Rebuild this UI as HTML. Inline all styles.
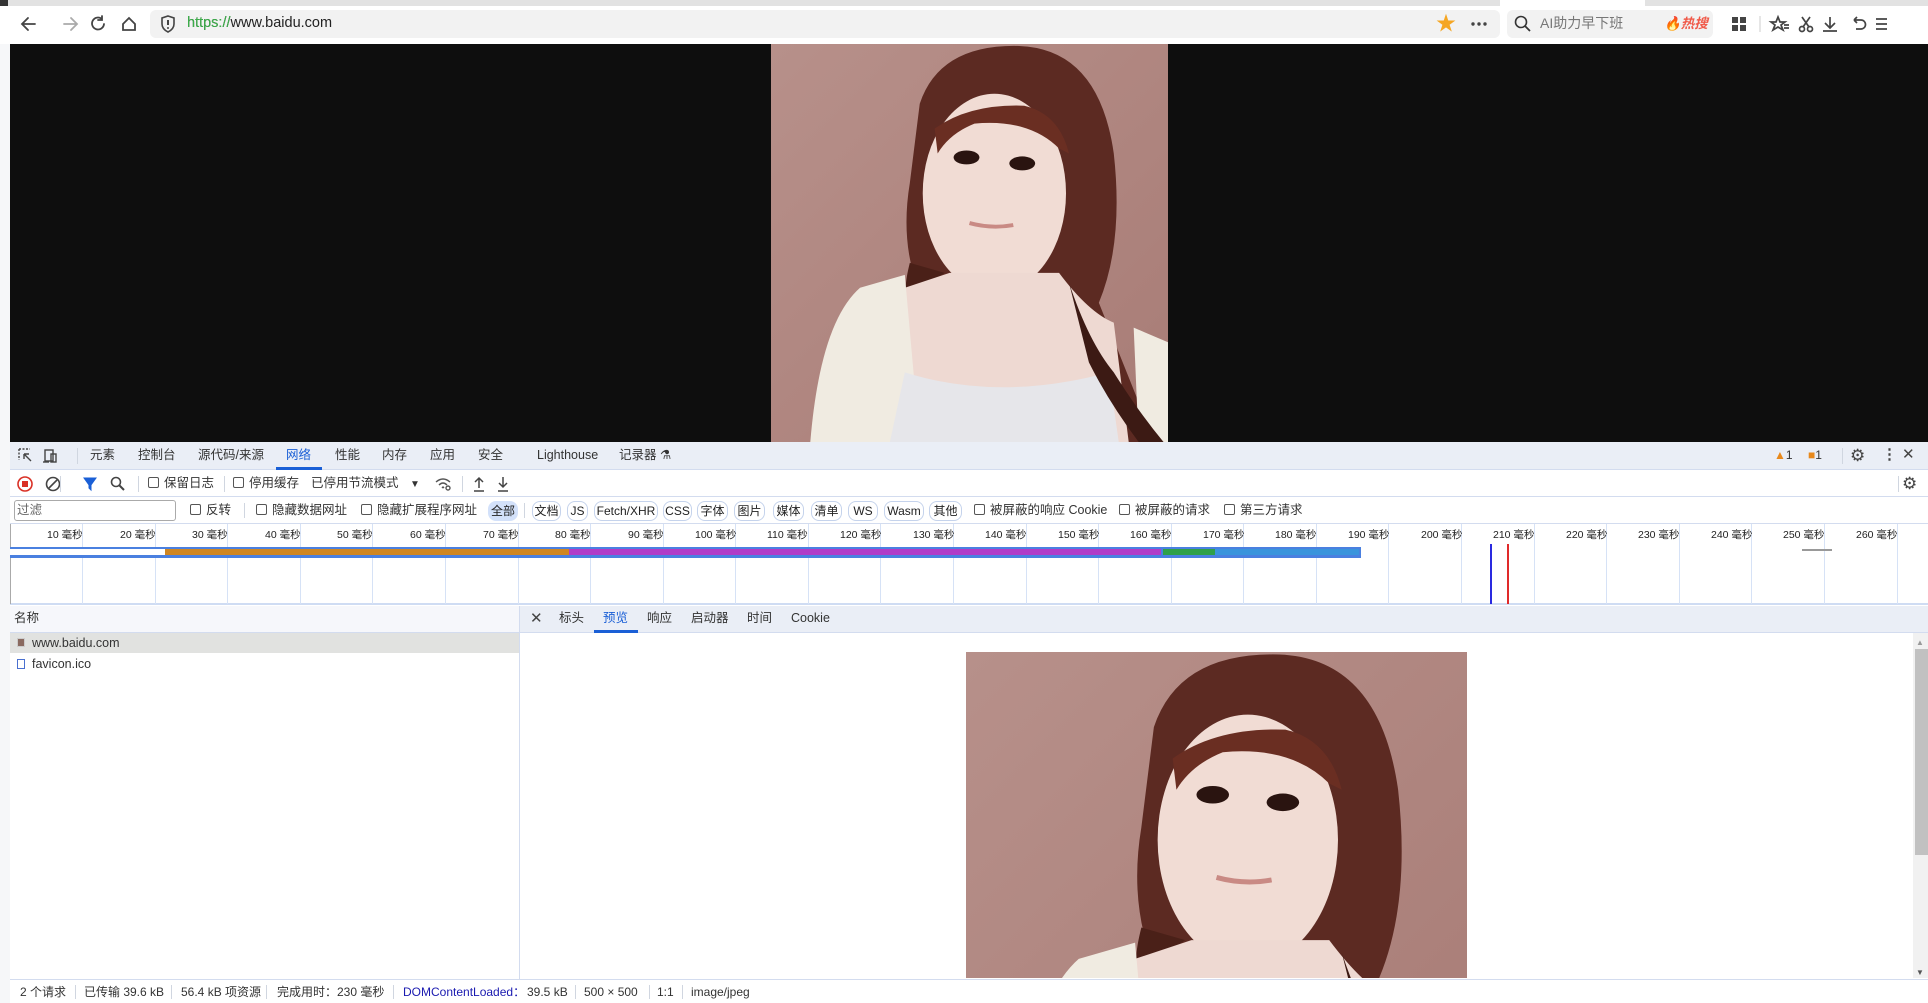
<!DOCTYPE html>
<html><head><meta charset="utf-8">
<style>
*{box-sizing:border-box;margin:0;padding:0}
html{width:1928px;height:1003px;overflow:hidden}
body{width:1928px;height:1003px;overflow:hidden;background:#fff;font-family:"Liberation Sans","Noto Sans CJK SC",sans-serif;font-size:12.5px;color:#333;position:relative}
.a{position:absolute}
.t{position:absolute;white-space:nowrap;line-height:15px;margin-top:-1px}
.pill{position:absolute;top:501px;height:20px;border:1px solid #c5d3ec;border-radius:8px;font-size:12px;line-height:18px;text-align:center;color:#222}
.cb{display:inline-block;width:11px;height:11px;border:1px solid #555;border-radius:2px;vertical-align:-1px;margin-right:5px}
.sep{position:absolute;width:1px;background:#d0d6e0}
.vl{position:absolute;top:524px;height:80px;width:1px;background:#d6e2f6}
.tk{position:absolute;top:529px;font-size:10.5px;color:#222;line-height:13px}
</style></head><body>
<svg width="0" height="0" style="position:absolute">
<defs>
<symbol id="ph" viewBox="0 0 400 400" preserveAspectRatio="xMidYMin slice">
<defs><linearGradient id="bg" x1="0" y1="0" x2="1" y2="1"><stop offset="0" stop-color="#b7908a"/><stop offset="1" stop-color="#a87c76"/></linearGradient></defs>
<rect width="400" height="400" fill="url(#bg)"/>
<path d="M150 60 Q170 0 250 2 Q330 5 345 110 Q355 200 330 260 L370 360 L400 400 L320 400 L290 300 Q250 250 240 240 L150 250 Q130 200 140 140 Z" fill="#5c2a22"/>
<path d="M140 220 Q130 260 145 250 L175 230 Z" fill="#4a2018"/>
<ellipse cx="225" cy="150" rx="72" ry="100" fill="#f1dcd4"/>
<path d="M165 85 Q200 60 255 62 Q290 70 300 110 L290 105 Q260 75 205 80 Q180 90 168 110 Z" fill="#6a2e22"/>
<ellipse cx="197" cy="114" rx="13" ry="7" fill="#2a1410"/>
<ellipse cx="253" cy="120" rx="13" ry="7" fill="#2a1410"/>
<path d="M200 180 Q222 186 244 182" stroke="#c98a84" stroke-width="4" fill="none"/>
<path d="M180 230 L290 230 Q320 270 345 280 L360 400 L110 400 L120 250 Z" fill="#eed9d2"/>
<path d="M40 400 Q50 280 90 245 L135 232 L150 400 Z" fill="#f0ebe1"/>
<path d="M365 285 L400 300 L400 400 L370 400 Z" fill="#f0ebe1"/>
<path d="M120 400 L135 330 Q230 360 340 330 L350 400 Z" fill="#e6e6ea"/>
<path d="M300 240 Q320 300 345 330 Q370 370 395 400 L370 400 Q340 360 320 320 Z" fill="#3c1a14"/>
</symbol>
</defs></svg>

<div class="a" style="left:0;top:0;width:1928px;height:6px;background:#e2e2e2"></div>
<div class="a" style="left:0;top:0;width:8px;height:14px;background:#333"></div>
<div class="a" style="left:1500px;top:0;width:145px;height:6px;background:#fff"></div>
<div class="a" style="left:0;top:6px;width:1928px;height:38px;background:#fff"></div>
<svg class="a" style="left:20px;top:14px" width="120" height="20" fill="none" stroke-width="1.8" stroke-linecap="round">
<path d="M15 10H3M8 4L2 10L8 16" stroke="#444"/>
<path d="M44 10H56M51 4L57 10L51 16" stroke="#aaa"/>
<path d="M82 5A6 6 0 1 0 84 10M82 2V6H78" stroke="#444"/>
<path d="M103 10L109 4L115 10V16H103Z" stroke="#444"/>
</svg>
<div class="a" style="left:150px;top:10px;width:1350px;height:28px;background:#f2f2f2;border-radius:6px"></div>
<svg class="a" style="left:160px;top:15px" width="16" height="18"><path d="M8 1L14 3V9Q14 14 8 17Q2 14 2 9V3Z" fill="none" stroke="#444" stroke-width="1.6"/><path d="M8 5V10" stroke="#444" stroke-width="2"/><circle cx="8" cy="13" r="1" fill="#444"/></svg>
<div class="t" style="left:187px;top:17px;font-size:14.5px;color:#222">https://www.baidu.com</div>
<div class="t" style="left:187px;top:17px;font-size:14.5px;color:#3cb04a">https://</div>
<div class="t" style="left:1436px;top:15px;font-size:20px;color:#f5a623;line-height:20px">★</div>
<svg class="a" style="left:1470px;top:21px" width="18" height="6"><circle cx="3" cy="3" r="1.7" fill="#444"/><circle cx="9" cy="3" r="1.7" fill="#444"/><circle cx="15" cy="3" r="1.7" fill="#444"/></svg>
<div class="a" style="left:1507px;top:10px;width:206px;height:28px;background:#f2f2f2;border-radius:6px"></div>
<svg class="a" style="left:1514px;top:15px" width="18" height="18"><circle cx="7" cy="7" r="5.5" fill="none" stroke="#333" stroke-width="1.6"/><path d="M11 11L16 16" stroke="#333" stroke-width="1.8"/></svg>
<div class="t" style="left:1540px;top:17px;font-size:14px;color:#777">AI助力早下班</div>
<div class="t" style="left:1664px;top:17px;font-size:13.5px;color:#f05a4a;font-style:italic;font-weight:bold">🔥热搜</div>
<svg class="a" style="left:1730px;top:14px" width="200" height="20" fill="none" stroke="#444" stroke-width="1.7">
<rect x="2" y="3" width="6" height="6" fill="#444" stroke="none"/><rect x="10" y="3" width="6" height="6" fill="#444" stroke="none"/><rect x="2" y="11" width="6" height="6" fill="#444" stroke="none"/><rect x="10" y="11" width="6" height="6" fill="#444" stroke="none"/>
<path d="M30 2V18" stroke="#ccc" stroke-width="1"/>
<path d="M48 3L50 8H55L51 11L53 16L48 13L43 16L45 11L41 8H46Z"/><path d="M54 11H59M54 14H59"/>
<circle cx="72" cy="15" r="2.5"/><circle cx="80" cy="15" r="2.5"/><path d="M73 13L80 3M79 13L72 3"/>
<path d="M100 3V13M95 9L100 14L105 9M93 17H107"/>
<path d="M124 6H131A4 4 0 0 1 131 15H126M124 6L127 3M124 6L127 9"/>
<path d="M146 5H157M146 10H157M146 15H157"/>
</svg>
<div class="a" style="left:0;top:44px;width:10px;height:959px;background:#f6f7f9"></div>
<div class="a" style="left:10px;top:44px;width:1918px;height:398px;background:#0e0e0e"></div>
<svg class="a" style="left:771px;top:44px" width="397" height="398"><use href="#ph" width="397" height="398"/></svg>

<div class="a" style="left:10px;top:442px;width:1918px;height:28px;background:#eaeef6;border-bottom:1px solid #d3dcef"></div>
<svg class="a" style="left:18px;top:448px" width="50" height="16" fill="none" stroke="#444" stroke-width="1.4">
<path d="M1 1H12M1 1V12" stroke-dasharray="2 1.5"/><path d="M6 6L13 13M6 6H11M6 6V11"/>
<rect x="27" y="2" width="8" height="11"/><rect x="33" y="6" width="5" height="8"/><path d="M25 14H31"/>
</svg>
<div class="sep" style="left:77px;top:448px;height:16px"></div>
<div class="t" style="left:90px;top:449px">元素</div>
<div class="t" style="left:138px;top:449px">控制台</div>
<div class="t" style="left:198px;top:449px">源代码/来源</div>
<div class="t" style="left:286px;top:449px;color:#1a5fd6">网络</div>
<div class="a" style="left:276px;top:467px;width:46px;height:3px;background:#1a5fd6"></div>
<div class="t" style="left:335px;top:449px">性能</div>
<div class="t" style="left:382px;top:449px">内存</div>
<div class="t" style="left:430px;top:449px">应用</div>
<div class="t" style="left:478px;top:449px">安全</div>
<div class="t" style="left:537px;top:449px">Lighthouse</div>
<div class="t" style="left:619px;top:449px">记录器 ⚗</div>
<div class="t" style="left:1774px;top:449px;font-size:12px"><span style="color:#e8891c">▲</span>1</div>
<div class="t" style="left:1808px;top:449px;font-size:12px"><span style="color:#e8891c">■</span>1</div>
<div class="sep" style="left:1842px;top:448px;height:16px"></div>
<div class="t" style="left:1850px;top:448px;font-size:17px;color:#444;line-height:17px">⚙</div>
<div class="t" style="left:1882px;top:448px;font-size:15px;color:#444;font-weight:bold">⋮</div>
<div class="t" style="left:1902px;top:448px;font-size:15px;color:#444">✕</div>

<div class="a" style="left:10px;top:470px;width:1918px;height:27px;background:#fff;border-bottom:1px solid #d3dcef"></div>
<svg class="a" style="left:16px;top:475px" width="140" height="18" fill="none" stroke-width="1.6">
<circle cx="9" cy="9" r="7" stroke="#d93025"/><rect x="6" y="6" width="6" height="6" fill="#d93025" stroke="none"/>
<circle cx="37" cy="9" r="6.5" stroke="#444"/><path d="M33 13L41 5" stroke="#444"/>
<path d="M68 3H80L75 10V15L73 13V10Z" fill="#1a5fd6" stroke="#1a5fd6" stroke-width="1"/>
<circle cx="100" cy="7" r="4.5" stroke="#444"/><path d="M103 10L108 15" stroke="#444" stroke-width="2"/>
</svg>
<div class="sep" style="left:60px;top:476px;height:16px"></div>
<div class="sep" style="left:138px;top:476px;height:16px"></div>
<div class="t" style="left:148px;top:477px"><span class="cb"></span>保留日志</div>
<div class="sep" style="left:224px;top:476px;height:16px"></div>
<div class="t" style="left:233px;top:477px"><span class="cb"></span>停用缓存</div>
<div class="t" style="left:311px;top:477px">已停用节流模式</div>
<div class="t" style="left:410px;top:478px;font-size:10px">▼</div>
<svg class="a" style="left:434px;top:476px" width="20" height="16" fill="none" stroke="#555" stroke-width="1.4"><path d="M2 6Q9 0 16 6M5 9Q9 5 13 9M8 12L9 11L10 12"/><circle cx="14" cy="12" r="2"/></svg>
<div class="sep" style="left:462px;top:476px;height:16px"></div>
<svg class="a" style="left:472px;top:475px" width="40" height="18" fill="none" stroke="#444" stroke-width="1.5"><path d="M7 13V3M3 7L7 3L11 7M2 16H12"/><path d="M31 2V12M27 8L31 12L35 8M26 16H36"/></svg>
<div class="sep" style="left:1898px;top:476px;height:16px"></div>
<div class="t" style="left:1902px;top:476px;font-size:17px;color:#444;line-height:17px">⚙</div>

<div class="a" style="left:10px;top:497px;width:1918px;height:27px;background:#fff;border-bottom:1px solid #d3dcef"></div>
<div class="a" style="left:14px;top:500px;width:162px;height:21px;border:1px solid #aaa;border-radius:3px"></div>
<div class="t" style="left:17px;top:504px;color:#666">过滤</div>
<div class="t" style="left:190px;top:504px"><span class="cb"></span>反转</div>
<div class="sep" style="left:244px;top:503px;height:15px"></div>
<div class="t" style="left:256px;top:504px"><span class="cb"></span>隐藏数据网址</div>
<div class="t" style="left:361px;top:504px"><span class="cb"></span>隐藏扩展程序网址</div>
<div class="pill" style="left:488px;width:30px;background:#d3e1fa;border-color:#d3e1fa">全部</div>
<div class="sep" style="left:524px;top:503px;height:15px"></div>
<div class="pill" style="left:532px;width:29px">文档</div>
<div class="pill" style="left:567px;width:21px">JS</div>
<div class="pill" style="left:594px;width:64px">Fetch/XHR</div>
<div class="pill" style="left:663px;width:29px">CSS</div>
<div class="pill" style="left:697px;width:31px">字体</div>
<div class="pill" style="left:734px;width:31px">图片</div>
<div class="pill" style="left:773px;width:31px">媒体</div>
<div class="pill" style="left:811px;width:31px">清单</div>
<div class="pill" style="left:848px;width:30px">WS</div>
<div class="pill" style="left:884px;width:40px">Wasm</div>
<div class="pill" style="left:929px;width:33px">其他</div>
<div class="t" style="left:974px;top:504px"><span class="cb"></span>被屏蔽的响应 Cookie</div>
<div class="t" style="left:1119px;top:504px"><span class="cb"></span>被屏蔽的请求</div>
<div class="t" style="left:1224px;top:504px"><span class="cb"></span>第三方请求</div>

<div class="a" style="left:10px;top:524px;width:1918px;height:81px;background:#fff;border-bottom:2px solid #cfdcf3"></div>
<div class="a" style="left:10px;top:524px;width:1px;height:80px;background:#aaa"></div>
<div class="vl" style="left:82px"></div><div class="vl" style="left:155px"></div><div class="vl" style="left:227px"></div><div class="vl" style="left:300px"></div><div class="vl" style="left:372px"></div><div class="vl" style="left:445px"></div><div class="vl" style="left:518px"></div><div class="vl" style="left:590px"></div><div class="vl" style="left:663px"></div><div class="vl" style="left:735px"></div><div class="vl" style="left:808px"></div><div class="vl" style="left:880px"></div><div class="vl" style="left:953px"></div><div class="vl" style="left:1026px"></div><div class="vl" style="left:1098px"></div><div class="vl" style="left:1171px"></div><div class="vl" style="left:1243px"></div><div class="vl" style="left:1316px"></div><div class="vl" style="left:1388px"></div><div class="vl" style="left:1461px"></div><div class="vl" style="left:1534px"></div><div class="vl" style="left:1606px"></div><div class="vl" style="left:1679px"></div><div class="vl" style="left:1751px"></div><div class="vl" style="left:1824px"></div><div class="vl" style="left:1897px"></div>
<div class="tk" style="left:47px">10 毫秒</div><div class="tk" style="left:120px">20 毫秒</div><div class="tk" style="left:192px">30 毫秒</div><div class="tk" style="left:265px">40 毫秒</div><div class="tk" style="left:337px">50 毫秒</div><div class="tk" style="left:410px">60 毫秒</div><div class="tk" style="left:483px">70 毫秒</div><div class="tk" style="left:555px">80 毫秒</div><div class="tk" style="left:628px">90 毫秒</div><div class="tk" style="left:695px">100 毫秒</div><div class="tk" style="left:767px">110 毫秒</div><div class="tk" style="left:840px">120 毫秒</div><div class="tk" style="left:913px">130 毫秒</div><div class="tk" style="left:985px">140 毫秒</div><div class="tk" style="left:1058px">150 毫秒</div><div class="tk" style="left:1130px">160 毫秒</div><div class="tk" style="left:1203px">170 毫秒</div><div class="tk" style="left:1275px">180 毫秒</div><div class="tk" style="left:1348px">190 毫秒</div><div class="tk" style="left:1421px">200 毫秒</div><div class="tk" style="left:1493px">210 毫秒</div><div class="tk" style="left:1566px">220 毫秒</div><div class="tk" style="left:1638px">230 毫秒</div><div class="tk" style="left:1711px">240 毫秒</div><div class="tk" style="left:1783px">250 毫秒</div><div class="tk" style="left:1856px">260 毫秒</div>
<div class="a" style="left:10px;top:547px;width:1351px;height:11px;background:#4a80e0"></div>
<div class="a" style="left:10px;top:549px;width:155px;height:6px;background:#fff"></div>
<div class="a" style="left:165px;top:549px;width:404px;height:6px;background:#cf8622"></div>
<div class="a" style="left:569px;top:549px;width:592px;height:6px;background:#b03cc8"></div>
<div class="a" style="left:1163px;top:549px;width:52px;height:6px;background:#2fa04a"></div>
<div class="a" style="left:1215px;top:549px;width:144px;height:6px;background:#3a94dc"></div>
<div class="a" style="left:1490px;top:544px;width:2px;height:60px;background:#2a2ae0"></div>
<div class="a" style="left:1507px;top:544px;width:2px;height:60px;background:#e02a2a"></div>
<div class="a" style="left:1802px;top:549px;width:30px;height:2px;background:#999"></div>

<div class="a" style="left:10px;top:606px;width:509px;height:27px;background:#f6f7fb;border-bottom:1px solid #d3dcef"></div>
<div class="t" style="left:14px;top:612px">名称</div>
<div class="a" style="left:10px;top:633px;width:509px;height:20px;background:#e1e2e0"></div>
<div class="a" style="left:17px;top:638px;width:8px;height:9px;background:#8a6a60;border:1px solid #ccc"></div>
<div class="t" style="left:32px;top:637px">www.baidu.com</div>
<div class="a" style="left:17px;top:659px;width:8px;height:10px;border:1px solid #4a70d0"></div>
<div class="t" style="left:32px;top:658px">favicon.ico</div>
<div class="a" style="left:519px;top:606px;width:1px;height:374px;background:#d3dcef"></div>

<div class="a" style="left:520px;top:606px;width:1408px;height:27px;background:#eaeef6;border-bottom:1px solid #d3dcef"></div>
<div class="t" style="left:530px;top:612px;font-size:15px;color:#444">✕</div>
<div class="t" style="left:559px;top:612px">标头</div>
<div class="t" style="left:603px;top:612px;color:#1a5fd6">预览</div>
<div class="a" style="left:594px;top:630px;width:44px;height:3px;background:#1a5fd6"></div>
<div class="t" style="left:647px;top:612px">响应</div>
<div class="t" style="left:691px;top:612px">启动器</div>
<div class="t" style="left:747px;top:612px">时间</div>
<div class="t" style="left:791px;top:612px">Cookie</div>
<svg class="a" style="left:966px;top:652px" width="501" height="326"><use href="#ph" width="501" height="501"/></svg>
<div class="a" style="left:1913px;top:633px;width:15px;height:345px;background:#f1f1f1"></div>
<div class="a" style="left:1915px;top:649px;width:13px;height:206px;background:#c1c1c1"></div>
<div class="t" style="left:1916px;top:636px;font-size:8px;color:#999">▲</div>
<div class="t" style="left:1916px;top:966px;font-size:8px;color:#555">▼</div>

<div class="a" style="left:10px;top:979px;width:1918px;height:24px;background:#fff;border-top:1px solid #d3dcef"></div>
<div class="t" style="left:20px;top:986px;font-size:12px">2 个请求</div>
<div class="sep" style="left:75px;top:985px;height:14px"></div>
<div class="t" style="left:84px;top:986px;font-size:12px">已传输 39.6 kB</div>
<div class="sep" style="left:171px;top:985px;height:14px"></div>
<div class="t" style="left:181px;top:986px;font-size:12px">56.4 kB 项资源</div>
<div class="sep" style="left:266px;top:985px;height:14px"></div>
<div class="t" style="left:277px;top:986px;font-size:12px">完成用时：230 毫秒</div>
<div class="sep" style="left:393px;top:985px;height:14px"></div>
<div class="t" style="left:403px;top:986px;font-size:12px;color:#1a1ab0">DOMContentLoaded：</div>
<div class="a" style="left:519px;top:979px;width:1409px;height:24px;background:#fff;border-top:1px solid #d3dcef"></div>
<div class="t" style="left:527px;top:986px;font-size:12px">39.5 kB</div>
<div class="sep" style="left:575px;top:985px;height:14px"></div>
<div class="t" style="left:584px;top:986px;font-size:12px">500 × 500</div>
<div class="sep" style="left:649px;top:985px;height:14px"></div>
<div class="t" style="left:657px;top:986px;font-size:12px">1:1</div>
<div class="sep" style="left:682px;top:985px;height:14px"></div>
<div class="t" style="left:691px;top:986px;font-size:12px">image/jpeg</div>
</body></html>
